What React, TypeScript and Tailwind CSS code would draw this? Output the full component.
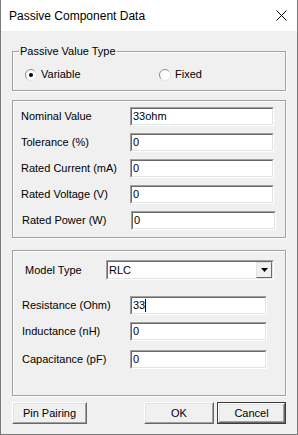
import { ReactNode } from "react";

function Sunken({ className, children }: { className: string; children?: ReactNode }) {
  return (
    <div
      className={`border border-t-[#a0a0a0] border-l-[#a0a0a0] border-b-white border-r-white ${className}`}
    >
      <div className="w-full h-full border border-t-[#696969] border-l-[#696969] border-b-[#e3e3e3] border-r-[#e3e3e3] bg-white flex items-center">
        {children}
      </div>
    </div>
  );
}

function Field({ value, className, caret }: { value: string; className: string; caret?: boolean }) {
  return (
    <Sunken className={className}>
      <span className="pl-[1px] leading-[13px] flex items-center">
        {value}
        {caret && <span className="inline-block w-[1px] h-[13px] bg-black" />}
      </span>
    </Sunken>
  );
}

function Button({ label, className, isDefault }: { label: string; className: string; isDefault?: boolean }) {
  const face = (
    <div className="w-full h-full border border-t-white border-l-white border-b-[#696969] border-r-[#696969]">
      <div className="w-full h-full border border-t-[#e3e3e3] border-l-[#e3e3e3] border-b-[#a0a0a0] border-r-[#a0a0a0] bg-[#f0f0f0] flex items-center justify-center">
        {label}
      </div>
    </div>
  );
  if (isDefault) {
    return <div className={`border border-[#3c3c3c] ${className}`}>{face}</div>;
  }
  return <div className={className}>{face}</div>;
}

function Radio({ checked, label, className }: { checked?: boolean; label: string; className?: string }) {
  return (
    <div className={`flex items-center gap-[4px] h-[13px] ${className ?? ""}`}>
      <svg width="12" height="12" viewBox="0 0 12 12">
        <defs>
          <linearGradient id="ring" x1="0" y1="0" x2="1" y2="1">
            <stop offset="0.45" stopColor="#8a8a8a" />
            <stop offset="0.55" stopColor="#e3e3e3" />
          </linearGradient>
        </defs>
        <circle cx="6" cy="6" r="5.5" fill="white" stroke="url(#ring)" strokeWidth="1" />
        {checked && <circle cx="6" cy="6" r="2" fill="black" />}
      </svg>
      <span className="leading-[13px]">{label}</span>
    </div>
  );
}

function Group({ className, label, children }: { className: string; label?: string; children: ReactNode }) {
  return (
    <div
      className={`relative border border-[#a0a0a0] shadow-[inset_1px_1px_0_#fff,1px_1px_0_#fff] ${className}`}
    >
      {label && (
        <span className="absolute left-[6px] -top-[8px] px-[1px] bg-[#f0f0f0] leading-[14px]">{label}</span>
      )}
      {children}
    </div>
  );
}

function Row({ label, value, labelWidth, inputWidth, className }: { label: string; value: string; labelWidth: string; inputWidth: string; className?: string }) {
  return (
    <div className={`flex items-center h-[19px] ${className ?? ""}`}>
      <span className={`${labelWidth} leading-[13px]`}>{label}</span>
      <Field value={value} className={`${inputWidth} h-[19px]`} />
    </div>
  );
}

export default function App() {
  return (
    <div className="w-[298px] h-[435px] bg-[#f0f0f0] border border-t-0 border-[#7a7a7a] flex flex-col font-['Liberation_Sans',Arial,sans-serif] text-[11px] text-black">
      <div className="h-[31px] bg-white flex items-center justify-between pl-[8px] pr-[10px]">
        <span className="text-[12px] leading-[16px]">Passive Component Data</span>
        <svg width="11" height="11" viewBox="0 0 11 11">
          <path d="M0.5 0.5 L10.5 10.5 M10.5 0.5 L0.5 10.5" stroke="black" strokeWidth="1" />
        </svg>
      </div>

      <div className="flex flex-col px-[11px]">
        <Group className="mt-[20px] h-[40px]" label="Passive Value Type">
          <div className="flex mt-[16px] pl-[12px]">
            <Radio checked label="Variable" className="w-[134px]" />
            <Radio label="Fixed" />
          </div>
        </Group>

        <Group className="mt-[9px] h-[138px]">
          <div className="flex flex-col gap-[7px] pt-[6px] pl-[8px]">
            <Row label="Nominal Value" value="33ohm" labelWidth="w-[109px]" inputWidth="w-[144px]" />
            <Row label="Tolerance (%)" value="0" labelWidth="w-[109px]" inputWidth="w-[144px]" />
            <Row label="Rated Current (mA)" value="0" labelWidth="w-[109px]" inputWidth="w-[144px]" />
            <Row label="Rated Voltage (V)" value="0" labelWidth="w-[109px]" inputWidth="w-[144px]" />
            <Row label="Rated Power (W)" value="0" labelWidth="w-[109px]" inputWidth="w-[145px]" className="ml-[1px]" />
          </div>
        </Group>

        <Group className="mt-[12px] h-[146px]">
          <div className="flex flex-col pl-[8px]">
            <div className="flex items-center mt-[9px] pl-[4px]">
              <span className="w-[81px] leading-[13px]">Model Type</span>
              <Sunken className="w-[168px] h-[20px]">
                <span className="pl-[1px] flex-1 leading-[13px]">RLC</span>
                <div className="w-[16px] h-full border border-t-[#e3e3e3] border-l-[#e3e3e3] border-b-[#696969] border-r-[#696969] bg-[#f0f0f0] flex items-center justify-center">
                  <svg width="7" height="4" viewBox="0 0 7 4">
                    <path d="M0 0 H7 L3.5 4 Z" fill="black" />
                  </svg>
                </div>
              </Sunken>
            </div>
            <div className="flex items-center h-[19px] mt-[16px] pl-[1px]">
              <span className="w-[108px] leading-[13px]">Resistance (Ohm)</span>
              <Field value="33" caret className="w-[137px] h-[19px]" />
            </div>
            <Row label="Inductance (nH)" value="0" labelWidth="w-[108px]" inputWidth="w-[137px]" className="mt-[7px] pl-[1px]" />
            <Row label="Capacitance (pF)" value="0" labelWidth="w-[108px]" inputWidth="w-[137px]" className="mt-[9px] pl-[1px]" />
          </div>
        </Group>

        <div className="flex justify-between mt-[6px]">
          <Button label="Pin Pairing" className="w-[75px] h-[22px]" />
          <div className="flex gap-[3px]">
            <Button label="OK" className="w-[70px] h-[22px]" />
            <Button label="Cancel" isDefault className="w-[69px] h-[22px]" />
          </div>
        </div>
      </div>
    </div>
  );
}
